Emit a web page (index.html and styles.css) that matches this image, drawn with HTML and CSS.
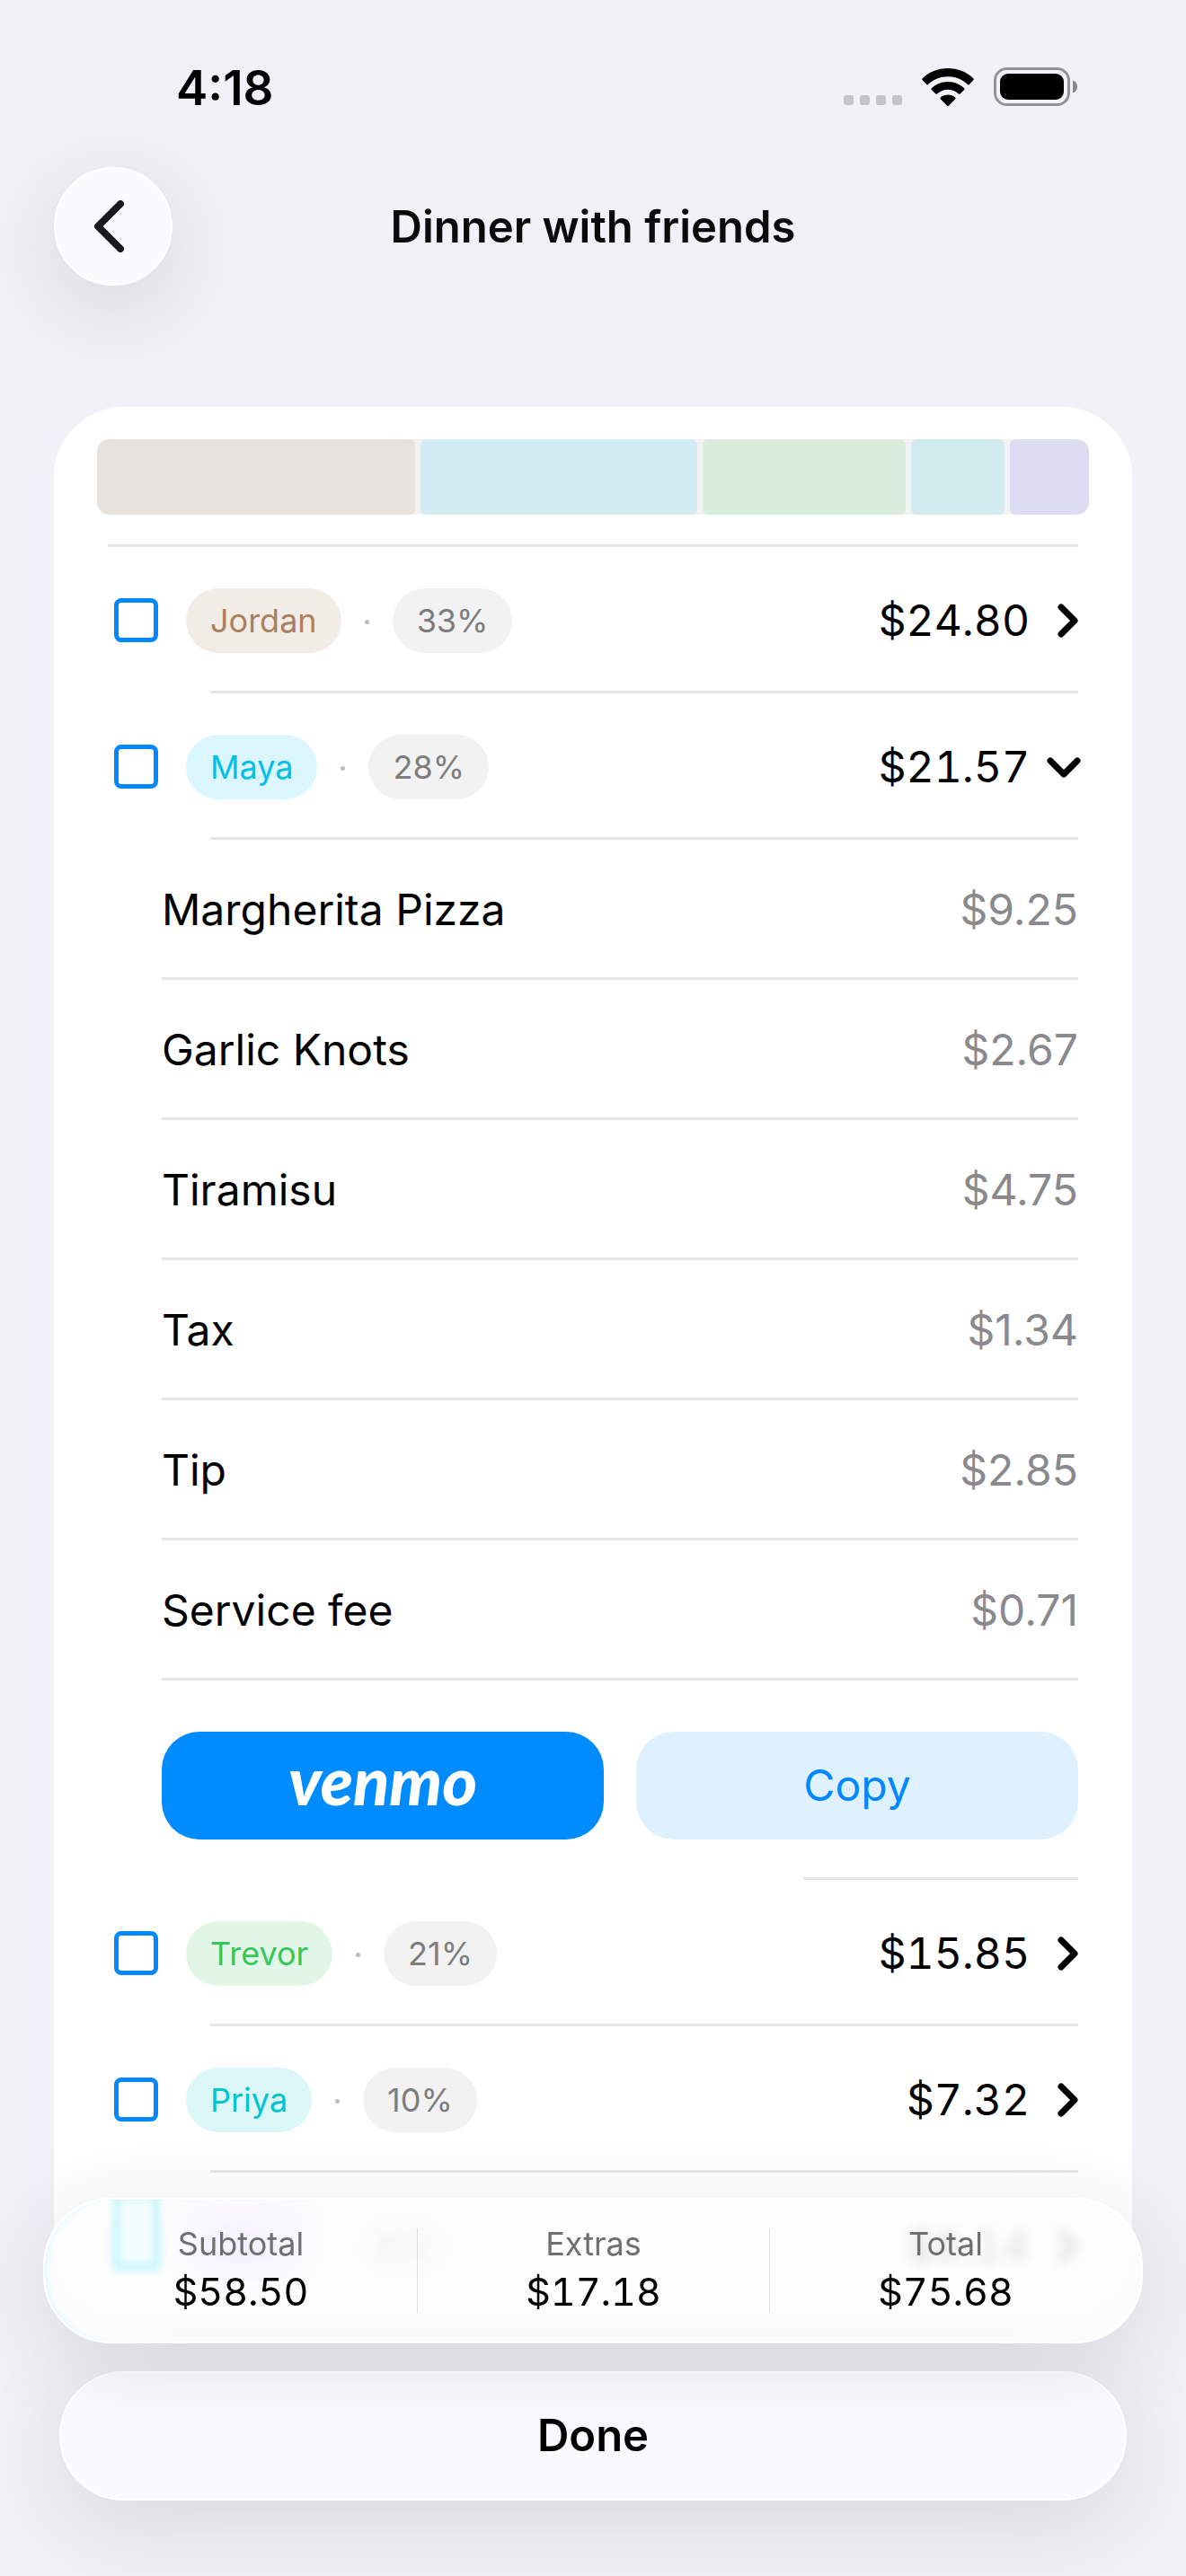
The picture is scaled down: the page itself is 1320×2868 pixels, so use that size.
FILE: index.html
```
<!DOCTYPE html>
<html lang="en">

<head>
    <meta charset="UTF-8">
    <meta name="viewport" content="width=device-width, initial-scale=1.0">
    <title>Dinner with friends</title>
    <link rel="stylesheet" href="styles.css">
</head>

<body>
    <svg width="0" height="0" class="sprite" aria-hidden="true">
        <symbol id="right" viewBox="0 0 36 40">
            <path d="M17 5L32 20L17 35" />
        </symbol>
        <symbol id="down" viewBox="0 0 36 40">
            <path d="M5 13L20 28L35 13" />
        </symbol>
    </svg>

    <div class="statusbar">
        <span class="time">4:18</span>
        <div class="status-icons">
            <div class="dots"><i></i><i></i><i></i><i></i></div>
            <svg width="58" height="43" viewBox="0 0 58 43" aria-hidden="true">
                <path d="M29 0C40 0 50 4 57.500 11.500Q58 12.500 57.300 13.300L52.500 18.200Q51.700 18.700 51 18.100C45 12.600 37.500 9.300 29 9.300S13 12.600 7 18.100Q6.300 18.700 5.500 18.200L.7 13.300Q0 12.500 .5 11.500C8 4 18 0 29 0Z" />
                <path d="M29 15C36 15 42.500 17.800 47.300 22.300Q48 23.200 47.200 24L42.600 28.500Q41.800 29.200 41 28.500C37.500 25.500 33.500 23.800 29 23.800S20.500 25.500 17 28.500Q16.200 29.200 15.400 28.500L10.800 24Q10 23.200 10.700 22.300C15.500 17.800 22 15 29 15Z" />
                <path d="M29 29.500C32.200 29.500 35 30.700 37.200 32.600Q38 33.500 37.200 34.300L29.800 41.700Q29 42.400 28.200 41.700L20.800 34.300Q20 33.500 20.800 32.600C23 30.700 25.800 29.500 29 29.500Z" />
            </svg>
            <svg width="94" height="44" viewBox="0 0 94 44" aria-hidden="true">
                <rect x="1.500" y="1.500" width="82" height="40" rx="13" fill="none" stroke="#929297" stroke-width="3" />
                <rect x="7" y="7" width="71" height="29" rx="9" />
                <path d="M88 14.500C91 15.500 93 18 93 21.500S91 27.500 88 28.500Z" fill="#88888c" />
            </svg>
        </div>
    </div>

    <header class="navbar">
        <button class="back" aria-label="Back">
            <svg width="34" height="58" viewBox="0 0 34 58"><path d="M30 4L5 29L30 54" /></svg>
        </button>
        <h1>Dinner with friends</h1>
    </header>

    <main class="card">
        <div class="split">
            <div class="brown" style="flex-grow: 24.80"></div>
            <div class="cyan" style="flex-grow: 21.57"></div>
            <div class="green" style="flex-grow: 15.85"></div>
            <div class="teal" style="flex-grow: 7.32"></div>
            <div class="purple" style="flex-grow: 6.14"></div>
        </div>

        <ul class="people">
            <li class="person">
                <div class="row">
                    <input type="checkbox" id="jordan">
                    <label for="jordan" class="chip brown">Jordan</label>
                    <span class="sep"></span>
                    <span class="chip">33%</span>
                    <button class="amount">$24.80 <svg><use href="#right" /></svg></button>
                </div>
            </li>
            <li class="person">
                <div class="row">
                    <input type="checkbox" id="maya">
                    <label for="maya" class="chip cyan">Maya</label>
                    <span class="sep"></span>
                    <span class="chip">28%</span>
                    <button class="amount" aria-expanded="true">$21.57 <svg><use href="#down" /></svg></button>
                </div>
            </li>
            <li class="details">
                <ul>
                    <li><span>Margherita Pizza</span><span class="price">$9.25</span></li>
                    <li><span>Garlic Knots</span><span class="price">$2.67</span></li>
                    <li><span>Tiramisu</span><span class="price">$4.75</span></li>
                    <li><span>Tax</span><span class="price">$1.34</span></li>
                    <li><span>Tip</span><span class="price">$2.85</span></li>
                    <li><span>Service fee</span><span class="price">$0.71</span></li>
                </ul>
                <div class="actions">
                    <button class="venmo">venmo</button>
                    <button class="copy">Copy</button>
                </div>
            </li>
            <li class="person">
                <div class="row">
                    <input type="checkbox" id="trevor">
                    <label for="trevor" class="chip green">Trevor</label>
                    <span class="sep"></span>
                    <span class="chip">21%</span>
                    <button class="amount">$15.85 <svg><use href="#right" /></svg></button>
                </div>
            </li>
            <li class="person">
                <div class="row">
                    <input type="checkbox" id="priya">
                    <label for="priya" class="chip teal">Priya</label>
                    <span class="sep"></span>
                    <span class="chip">10%</span>
                    <button class="amount">$7.32 <svg><use href="#right" /></svg></button>
                </div>
            </li>
            <li class="person">
                <div class="row">
                    <input type="checkbox" id="sam">
                    <label for="sam" class="chip purple">Sam</label>
                    <span class="sep"></span>
                    <span class="chip">8%</span>
                    <button class="amount">$6.14 <svg><use href="#right" /></svg></button>
                </div>
            </li>
        </ul>
    </main>

    <footer class="bottom">
        <dl class="totals">
            <div><dt>Subtotal</dt><dd>$58.50</dd></div>
            <div><dt>Extras</dt><dd>$17.18</dd></div>
            <div><dt>Total</dt><dd>$75.68</dd></div>
        </dl>
        <button class="done">Done</button>
    </footer>
</body>

</html>
```
FILE: styles.css
```
* {
    box-sizing: border-box;
}

body {
    margin: 0;
    min-height: 100vh;
    background-color: #f2f1f7;
    color: black;
    font-family: Inter, "Liberation Sans", sans-serif;
    font-size: 48px;
    line-height: 60px;
}

button {
    border: none;
    padding: 0;
    background: none;
    color: inherit;
    font: inherit;
    cursor: pointer;
}

ul {
    list-style: none;
    margin: 0;
    padding: 0;
}

.sprite {
    position: absolute;
}

/* status bar */
.statusbar {
    display: flex;
    justify-content: space-between;
    align-items: flex-start;
    height: 186px;
    padding: 68px 120px 0 196px;
}

.time {
    font-size: 53px;
    font-weight: 600;
}

.status-icons {
    display: flex;
    align-items: flex-end;
    gap: 22px;
    padding-top: 7px;
}

.dots {
    display: flex;
    gap: 7px;
    padding-bottom: 2px;
}

.dots i {
    width: 11px;
    height: 11px;
    border-radius: 3px;
    background-color: #c4c3c8;
}

/* nav */
.navbar {
    display: grid;
    grid-template-columns: 132px 1fr 132px;
    align-items: center;
    padding: 0 60px;
}

.navbar h1 {
    margin: 0;
    padding-top: 2px;
    text-align: center;
    font-size: 49px;
    font-weight: 600;
    color: #0b0b0c;
}

.back {
    display: flex;
    align-items: center;
    height: 132px;
    padding-left: 42px;
    border: 2px solid white;
    border-radius: 50%;
    background-color: #fafaff;
    box-shadow: 0 24px 100px rgba(0, 0, 0, 0.12);
}

.back svg {
    fill: none;
    stroke: #1b1a1f;
    stroke-width: 8;
    stroke-linecap: round;
    stroke-linejoin: round;
}

/* card */
.card {
    margin: 135px 60px 288px;
    padding: 36px 60px 0;
    border-radius: 78px;
    background-color: white;
}

.split {
    display: flex;
    gap: 6px;
    height: 84px;
    margin: 0 -12px 33px;
    border-radius: 14px;
    overflow: hidden;
    background-color: #f2f2f2;
}

.split div {
    flex-basis: 0;
    border-radius: 6px;
}

.split .brown { background-color: #e7e2de; }
.split .cyan { background-color: #d3ecf3; }
.split .green { background-color: #d9eddd; }
.split .teal { background-color: #d1ebef; }
.split .purple { background-color: #dedcf2; }

.people {
    border-top: 3px solid #e6e6e6;
}

.person::after,
.details::after {
    content: "";
    display: block;
    height: 3px;
    margin-left: 114px;
    background-color: #e6e6e6;
}

.details::after {
    margin-left: 774px;
}

.person:last-child::after {
    display: none;
}

.row {
    display: flex;
    align-items: center;
    height: 160px;
    padding: 3px 0 0 7px;
}

.row input {
    appearance: none;
    width: 49px;
    height: 49px;
    margin: 0 31px 0 0;
    border: 5px solid #0088ff;
    border-radius: 8px;
}

.chip {
    padding: 0 27px;
    border-radius: 36px;
    background-color: #f2f2f2;
    color: #7d7d7d;
    font-size: 36px;
    line-height: 72px;
}

.chip.brown { background-color: #f2ece6; color: #ac7f5e; }
.chip.cyan { background-color: #dbf6fd; color: #00c0e8; }
.chip.green { background-color: #e2f6e7; color: #34c759; }
.chip.teal { background-color: #dbf7f8; color: #00c3d0; }
.chip.purple { background-color: #ebe8ff; color: #6155f5; }

.sep {
    width: 5px;
    height: 5px;
    margin: 4px 26px 0;
    border-radius: 50%;
    background-color: #bcbcbc;
}

.amount {
    display: flex;
    align-items: center;
    gap: 18px;
    margin-left: auto;
    font-variant-numeric: tabular-nums;
}

.amount svg {
    width: 36px;
    height: 40px;
    overflow: visible;
    fill: none;
    stroke: black;
    stroke-width: 7;
    stroke-linecap: round;
    stroke-linejoin: round;
}

symbol {
    overflow: visible;
}

.details li {
    display: flex;
    justify-content: space-between;
    margin-left: 60px;
    padding: 48px 0 45px;
    border-bottom: 3px solid #e6e6e6;
}

.price {
    color: #8a8a8e;
}

.actions {
    display: grid;
    grid-template-columns: 1fr 1fr;
    gap: 36px;
    margin-left: 60px;
    padding: 57px 0 42px;
}

.actions button {
    height: 120px;
    border-radius: 42px;
}

.actions .venmo {
    padding-bottom: 12px;
    background-color: #008cff;
    color: white;
    font-family: Lato, sans-serif;
    font-size: 74px;
    font-weight: 900;
    font-style: italic;
}

.copy {
    background-color: #dff1ff;
    color: #0088ff;
}

/* floating totals and button */
.bottom {
    position: fixed;
    left: 0;
    right: 0;
    bottom: 0;
    padding: 0 48px 84px;
}

.totals {
    position: relative;
    display: grid;
    grid-template-columns: repeat(3, 1fr);
    margin: 0 0 31px;
    padding: 32px 22px;
    border: 2px solid white;
    border-radius: 76px;
    background-color: rgba(253, 253, 253, 0.88);
    background-image: radial-gradient(ellipse 100px 80px at 220px 40px, rgba(242, 236, 255, 0.5), transparent);
    backdrop-filter: blur(7px);
    box-shadow: 0 20px 110px rgba(0, 0, 0, 0.11), inset 5px 0 6px -3px #dcf8fd;
    text-align: center;
    overflow: hidden;
}

.totals::before {
    content: "";
    position: absolute;
    box-sizing: border-box;
    top: -8px;
    left: 76px;
    width: 52px;
    height: 86px;
    border: 8px solid #c4f6ff;
    background-color: #f6fdff;
    filter: blur(4px);
}

.totals div + div {
    border-left: 1px solid #dedede;
}

.totals dt {
    margin-bottom: 12px;
    color: #6f6f72;
    font-size: 36px;
    line-height: 34px;
}

.totals dd {
    margin: 0;
    font-size: 43px;
    line-height: 48px;
    font-variant-numeric: tabular-nums;
}

.done {
    display: block;
    width: calc(100% - 36px);
    height: 144px;
    margin: 0 auto;
    border: 2px solid white;
    border-radius: 72px;
    background-color: #fafaff;
    box-shadow: 0 24px 110px rgba(0, 0, 0, 0.11);
    font-size: 49px;
    font-weight: 600;
}
```
